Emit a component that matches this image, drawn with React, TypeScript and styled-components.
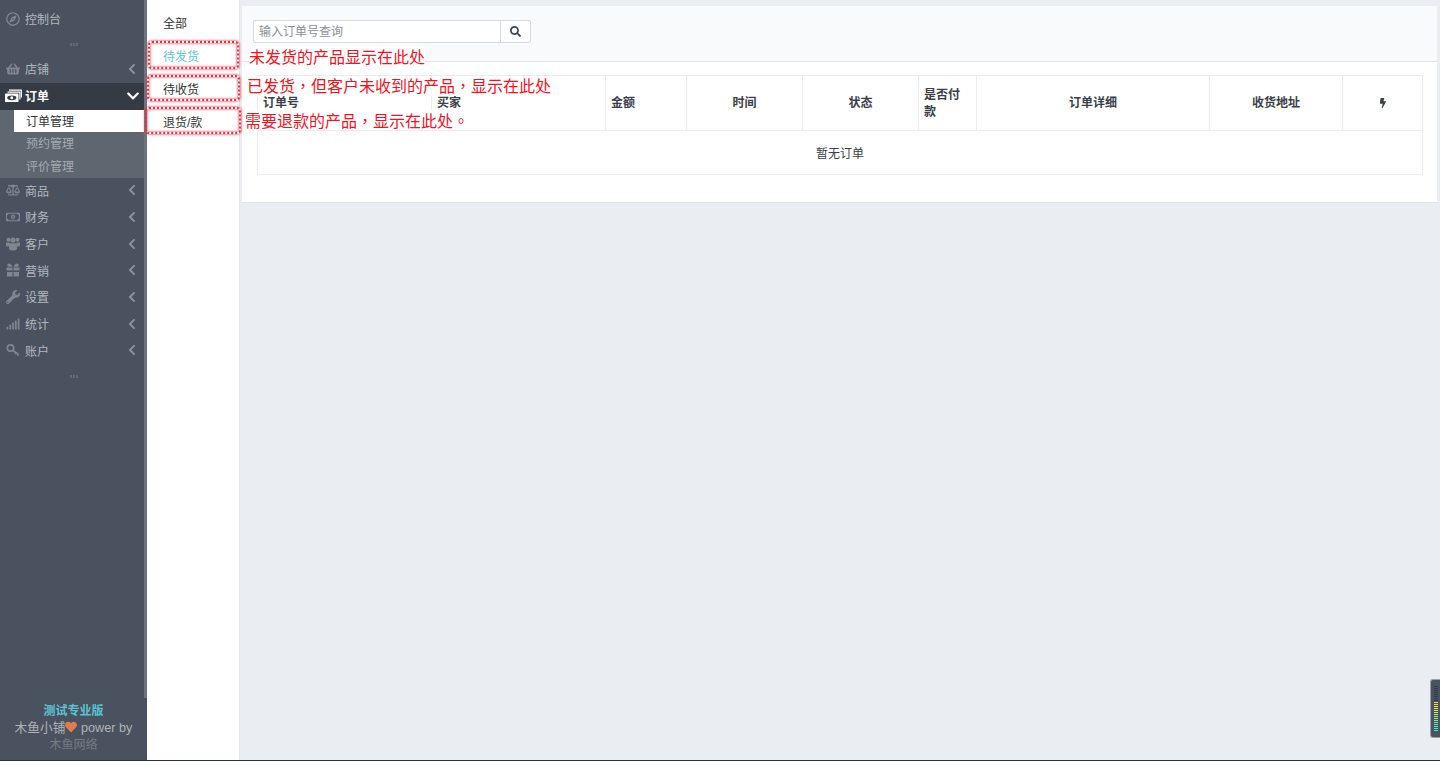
import React from 'react'
import styled, { createGlobalStyle } from 'styled-components'
import {
  FaRegCompass, FaShoppingBasket, FaBalanceScale, FaRegMoneyBillAlt, FaWrench, FaSignal,
  FaChevronLeft, FaChevronDown, FaHeart, FaSearch, FaBolt,
} from 'react-icons/fa'

const GlobalStyle = createGlobalStyle`
  html, body {
    margin: 0;
    height: 100%;
    overflow: hidden;
    background: #eaedf1;
    font-family: "Liberation Sans", "Noto Sans CJK SC", sans-serif;
    font-size: 12px;
    color: #333;
  }
`

const Page = styled.div`
  position: relative;
  display: flex;
  height: 760px;
  border-bottom: 1px solid #27343c;
`

const Sidebar = styled.aside`
  box-sizing: border-box;
  width: 147px;
  flex: none;
  display: flex;
  flex-direction: column;
  background: #49525e;
  padding-top: 6px;
`

const SideScroll = styled.div`
  position: absolute;
  left: 144px;
  top: 0;
  width: 3px;
  height: 698px;
  background: #6c747e;
`

const MenuRow = styled.div<{ $active?: boolean; $height?: number }>`
  box-sizing: border-box;
  display: flex;
  align-items: center;
  height: ${p => p.$height || 27}px;
  flex: none;
  padding: 0 9px 2px 6px;
  background: ${p => (p.$active ? '#343b45' : 'transparent')};
  color: ${p => (p.$active ? '#fff' : '#b3b8be')};
  font-size: 12px;
  font-weight: ${p => (p.$active ? 700 : 400)};
`

const MenuIcon = styled.span<{ $active?: boolean }>`
  width: 19px;
  display: flex;
  align-items: center;
  flex: none;
  font-size: 14px;
  color: ${p => (p.$active ? '#fff' : '#7f868e')};
`

const MenuLabel = styled.span`
  flex: 1;
`

const Arrow = styled.span<{ $active?: boolean }>`
  display: flex;
  font-size: ${p => (p.$active ? '14px' : '12px')};
  color: ${p => (p.$active ? '#fff' : '#8d949c')};
  margin-right: ${p => (p.$active ? '-2px' : '0')};
`

const Dots = styled.div<{ $top: number; $bottom: number }>`
  display: flex;
  justify-content: center;
  gap: 1px;
  margin: ${p => p.$top}px 0 ${p => p.$bottom}px;
  flex: none;

  i {
    width: 2px;
    height: 3px;
    background: #626a74;
  }
`

const SubMenu = styled.div`
  background: #5e6670;
  padding-left: 14px;
  flex: none;
`

const SubItem = styled.div<{ $active?: boolean }>`
  height: ${p => (p.$active ? '22px' : '23px')};
  line-height: 25px;
  padding-left: 12px;
  background: ${p => (p.$active ? '#fff' : 'transparent')};
  color: ${p => (p.$active ? '#333' : '#a6abb1')};
`

const SideFooter = styled.div`
  margin-top: auto;
  padding: 0 0 6px;
  text-align: center;
  line-height: 17px;
  color: #b0b4b9;
  font-size: 12.7px;

  svg {
    color: #e07a50;
    vertical-align: -1px;
  }
`

const Edition = styled.div`
  color: #5cc2d3;
  font-size: 12px;
  font-weight: 700;
`

const Company = styled.div`
  color: #777c82;
  font-size: 12px;
`

const SubNav = styled.nav`
  box-sizing: border-box;
  width: 93px;
  flex: none;
  background: #fff;
  border-right: 1px solid #e1e5ea;
  padding-top: 8px;
`

const SubNavItem = styled.div<{ $active?: boolean }>`
  height: 33px;
  line-height: 33px;
  padding-left: 16px;
  color: ${p => (p.$active ? '#62c6da' : '#333')};
`

const Main = styled.main`
  flex: 1;
  min-width: 0;
  padding: 6px 3px 0 2px;
`

const Card = styled.section`
  background: #fff;
  border-bottom: 1px solid #e1e5ea;
  height: 197px;
  box-sizing: border-box;
`

const CardHead = styled.div`
  box-sizing: border-box;
  height: 56px;
  background: #f9fafc;
  border-bottom: 1px solid #dfe4ea;
  padding: 14px 11px 0;
`

const SearchBox = styled.div`
  display: flex;
  width: 278px;
  height: 23px;
  box-sizing: border-box;
  background: #fff;
  border: 1px solid #d6dae0;
  border-radius: 2px;
`

const SearchInput = styled.div`
  flex: 1;
  line-height: 23px;
  padding-left: 5px;
  color: #8b9096;
  border-right: 1px solid #d6dae0;
`

const SearchButton = styled.div`
  width: 29px;
  display: flex;
  align-items: center;
  justify-content: center;
  font-size: 11px;
  color: #3c4650;
`

const TableWrap = styled.div`
  padding: 13px 16px 0 15px;
`

const Table = styled.table`
  width: 100%;
  table-layout: fixed;
  border-collapse: collapse;
  background: #fff;

  th, td {
    border: 1px solid #e9ecf0;
  }
`

const Th = styled.th<{ $center?: boolean }>`
  box-sizing: border-box;
  height: 55px;
  padding: 1px 5px 0;
  text-align: ${p => (p.$center ? 'center' : 'left')};
  font-size: 12px;
  line-height: 17px;
  font-weight: 700;
  color: #3a4048;

  svg {
    font-size: 10px;
    vertical-align: -1px;
  }
`

const EmptyCell = styled.td`
  box-sizing: border-box;
  height: 44px;
  padding: 0;
  text-align: center;
  font-size: 12px;
  color: #3a4048;
`

const Scribble = styled.div<{ $left: number; $top: number; $width: number; $height: number }>`
  position: absolute;
  left: ${p => p.$left}px;
  top: ${p => p.$top}px;
  width: ${p => p.$width}px;
  height: ${p => p.$height}px;
  box-sizing: border-box;
  border: 2px dotted #ee2a40;
  border-radius: 4px;
  box-shadow: 0 0 2px 1px rgba(240, 60, 80, 0.6), inset 0 0 2px 1px rgba(240, 60, 80, 0.55);
`

const Note = styled.div<{ $left: number; $top: number; $width: number; $height: number; $shift: number }>`
  position: absolute;
  left: ${p => p.$left}px;
  top: ${p => p.$top}px;
  width: ${p => p.$width}px;
  height: ${p => p.$height}px;
  line-height: ${p => p.$height + p.$shift}px;
  background: #fff;
  color: #f5121e;
  font-size: 16px;
  white-space: nowrap;
`

// the commas in the notes sit in the middle of their cell
const Punct = styled.span`
  font-family: "Noto Sans CJK TC", sans-serif;
  line-height: 1;
`

const Meter = styled.div`
  position: absolute;
  left: 1430px;
  top: 679px;
  width: 10px;
  height: 59px;
  box-sizing: border-box;
  background: #4b5260;
  border: 1px solid #9aa0a8;
  border-right: 0;
  border-radius: 3px 0 0 3px;
  padding: 6px 0 0 3px;
  display: flex;
  flex-direction: column;
  gap: 1px;
`

const MeterBar = styled.i<{ $color: string }>`
  display: block;
  width: 4px;
  height: 1px;
  background: ${p => p.$color};
`

const BillsIcon = () => (
  <svg width="17" height="13" viewBox="0 0 17 13" style={{ marginLeft: -1 }}>
    <path d="M4 0.5h13v8h-1.2v-6.8H4z" fill="#fff" />
    <path d="M2.5 2.5h13v8h-1.2v-6.8h-11.800z" fill="#fff" />
    <rect x="0" y="4.500" width="13.500" height="8.500" rx="0.500" fill="#fff" />
    <ellipse cx="6.800" cy="8.800" rx="4.600" ry="2.400" fill="#343b45" />
    <circle cx="6.800" cy="8.800" r="1.500" fill="#fff" />
  </svg>
)

const UsersIcon = () => (
  <svg width="14" height="14" viewBox="0 0 14 14" fill="currentColor">
    <circle cx="2.500" cy="2.800" r="2" />
    <circle cx="11.500" cy="2.800" r="2" />
    <circle cx="7" cy="3" r="2.600" />
    <path d="M0 5.500h3l1 1v3H0.800L0 8.500z" />
    <path d="M14 5.500h-3l-1 1v3h3.200l.8-1z" />
    <path d="M4 6.300h6l1 1v5l-2 1.200H5l-2-1.200v-5z" />
  </svg>
)

const GiftIcon = () => (
  <svg width="14" height="14" viewBox="0 0 14 14" fill="currentColor">
    <path d="M1.500 1.200C2.500 0 5 0 6.500 3.800H2.500C1.300 3.300 1 2 1.500 1.200z" />
    <path d="M12.500 1.200C11.500 0 9 0 7.500 3.800h4C12.700 3.300 13 2 12.500 1.200z" />
    <rect x="0.500" y="4.500" width="6" height="3" />
    <rect x="7.500" y="4.500" width="6" height="3" />
    <rect x="1" y="9" width="5.500" height="4.500" />
    <rect x="7.500" y="9" width="5.500" height="4.500" />
  </svg>
)

const KeyIcon = () => (
  <svg width="14" height="14" viewBox="0 0 14 14" fill="none" stroke="currentColor">
    <circle cx="4.500" cy="5" r="3.200" strokeWidth="1.800" />
    <path d="M7 7.500l5.500 4M10 9.500l-1 1.500M12.500 11.300l-1 1.500" strokeWidth="1.600" />
  </svg>
)

type MenuItem = { label: string; icon: React.ReactNode }

const topMenus: MenuItem[] = [
  { label: '商品', icon: <FaBalanceScale /> },
  { label: '财务', icon: <FaRegMoneyBillAlt /> },
  { label: '客户', icon: <UsersIcon /> },
  { label: '营销', icon: <GiftIcon /> },
  { label: '设置', icon: <FaWrench /> },
  { label: '统计', icon: <FaSignal /> },
  { label: '账户', icon: <KeyIcon /> },
]

const meterColors = [
  '#333a46', '#333a46', '#333a46', '#333a46', '#333a46', '#333a46', '#333a46', '#333a46',
  '#f5d83c', '#f5d83c', '#eee544', '#e8ea4c', '#dcee54', '#c8f060', '#b4f06c', '#a0f078',
  '#8cf084', '#78f090', '#68f09c', '#58f0a8', '#4cf0b4', '#44f0bc', '#3cf0c4',
]

export default function App() {
  return (
    <Page>
      <GlobalStyle />
      <Sidebar>
        <MenuRow>
          <MenuIcon><FaRegCompass /></MenuIcon>
          <MenuLabel>控制台</MenuLabel>
        </MenuRow>
        <Dots $top={10} $bottom={10}><i /><i /><i /></Dots>
        <MenuRow>
          <MenuIcon><FaShoppingBasket /></MenuIcon>
          <MenuLabel>店铺</MenuLabel>
          <Arrow><FaChevronLeft /></Arrow>
        </MenuRow>
        <MenuRow $active>
          <MenuIcon $active><BillsIcon /></MenuIcon>
          <MenuLabel>订单</MenuLabel>
          <Arrow $active><FaChevronDown /></Arrow>
        </MenuRow>
        <SubMenu>
          <SubItem $active>订单管理</SubItem>
          <SubItem>预约管理</SubItem>
          <SubItem>评价管理</SubItem>
        </SubMenu>
        {topMenus.map(m => (
          <MenuRow key={m.label} $height={26.67}>
            <MenuIcon>{m.icon}</MenuIcon>
            <MenuLabel>{m.label}</MenuLabel>
            <Arrow><FaChevronLeft /></Arrow>
          </MenuRow>
        ))}
        <Dots $top={10} $bottom={0}><i /><i /><i /></Dots>
        <SideFooter>
          <Edition>测试专业版</Edition>
          <div>木鱼小铺<FaHeart size={12} /> power by</div>
          <Company>木鱼网络</Company>
        </SideFooter>
      </Sidebar>
      <SideScroll />

      <SubNav>
        <SubNavItem>全部</SubNavItem>
        <SubNavItem $active>待发货</SubNavItem>
        <SubNavItem>待收货</SubNavItem>
        <SubNavItem>退货/款</SubNavItem>
      </SubNav>

      <Main>
        <Card>
          <CardHead>
            <SearchBox>
              <SearchInput>输入订单号查询</SearchInput>
              <SearchButton><FaSearch /></SearchButton>
            </SearchBox>
          </CardHead>
          <TableWrap>
            <Table>
              <colgroup>
                <col style={{ width: 174 }} />
                <col style={{ width: 174 }} />
                <col style={{ width: 81 }} />
                <col style={{ width: 116 }} />
                <col style={{ width: 116 }} />
                <col style={{ width: 58 }} />
                <col style={{ width: 233 }} />
                <col style={{ width: 133 }} />
                <col style={{ width: 80 }} />
              </colgroup>
              <thead>
                <tr>
                  <Th>订单号</Th>
                  <Th>买家</Th>
                  <Th>金额</Th>
                  <Th $center>时间</Th>
                  <Th $center>状态</Th>
                  <Th>是否付款</Th>
                  <Th $center>订单详细</Th>
                  <Th $center>收货地址</Th>
                  <Th $center><FaBolt /></Th>
                </tr>
              </thead>
              <tbody>
                <tr>
                  <EmptyCell colSpan={9}>暂无订单</EmptyCell>
                </tr>
              </tbody>
            </Table>
          </TableWrap>
        </Card>
      </Main>

      <Note $left={249} $top={46} $width={176} $height={22} $shift={2}>未发货的产品显示在此处</Note>
      <Note $left={247} $top={76} $width={318} $height={20} $shift={2}>已发货<Punct>，</Punct>但客户未收到的产品<Punct>，</Punct>显示在此处</Note>
      <Note $left={245} $top={110} $width={237} $height={20} $shift={4}>需要退款的产品<Punct>，</Punct>显示在此处<Punct>。</Punct></Note>

      <Scribble $left={148} $top={41} $width={91} $height={28} />
      <Scribble $left={147} $top={75} $width={93} $height={26} />
      <Scribble $left={145} $top={107} $width={96} $height={27} />

      <Meter>
        {meterColors.map((c, i) => <MeterBar key={i} $color={c} />)}
      </Meter>
    </Page>
  )
}
